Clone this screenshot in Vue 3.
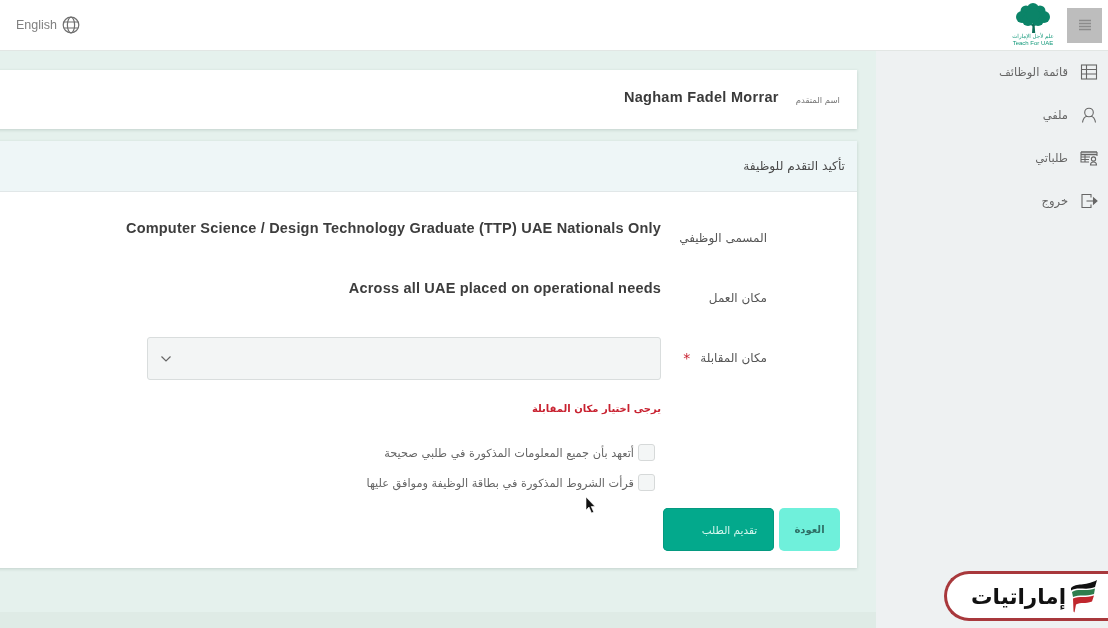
<script setup>
const menu = [
  { label: 'قائمة الوظائف', icon: 'table' },
  { label: 'ملفي', icon: 'user' },
  { label: 'طلباتي', icon: 'requests' },
  { label: 'خروج', icon: 'logout' }
]

const terms = [
  'أتعهد بأن جميع المعلومات المذكورة في طلبي صحيحة',
  'قرأت الشروط المذكورة في بطاقة الوظيفة وموافق عليها'
]
</script>

<template>
  <div class="page">
    <header class="topbar">
      <div class="brand">
        <button class="menu-btn" aria-label="menu">
          <svg width="14" height="12" viewBox="0 0 14 12" fill="none" stroke="#8c8c8c" stroke-width="1.3">
            <path d="M1 1.5h12M1 4.5h12M1 7.5h12M1 10.5h12" />
          </svg>
        </button>
        <div class="logo">
          <svg width="38" height="30" viewBox="0 0 38 30">
            <path d="M18 30l.8-11h1.600l.8 11zM19 24l-6-6 1-.6 5.500 4.500zM20 23l5-5 .8.6-5.500 5z" fill="#0d6e57" />
            <g fill="#0b8468">
              <circle cx="19" cy="6" r="6" />
              <circle cx="12" cy="8" r="5.500" />
              <circle cx="26" cy="8" r="5.500" />
              <circle cx="8" cy="14" r="6" />
              <circle cx="30" cy="14" r="6" />
              <circle cx="14" cy="17" r="6" />
              <circle cx="24" cy="17" r="6" />
              <circle cx="19" cy="12" r="7" />
            </g>
          </svg>
          <span class="logo-ar">علم لأجل الإمارات</span>
          <span class="logo-en">Teach For UAE</span>
        </div>
      </div>
      <div class="lang">
        <svg width="18" height="18" viewBox="0 0 18 18" fill="none" stroke="#6f6f6f" stroke-width="1.200">
          <circle cx="9" cy="9" r="7.800" />
          <ellipse cx="9" cy="9" rx="3.600" ry="7.800" />
          <path d="M1.800 6h14.400M1.800 12h14.400" />
        </svg>
        <span>English</span>
      </div>
    </header>

    <div class="layout">
      <aside class="sidebar">
        <a v-for="item in menu" :key="item.icon" class="side-item">
          <svg width="18" height="18" viewBox="0 0 18 18" fill="none" stroke="#666" stroke-width="1.100">
            <template v-if="item.icon === 'table'">
              <rect x="1.500" y="2" width="15" height="14" />
              <path d="M1.500 6.500h15M1.500 11h15M6.500 2v14" />
            </template>
            <template v-else-if="item.icon === 'user'">
              <circle cx="9" cy="6.500" r="4.300" />
              <path d="M2.500 16.500c.6-4 3-6 4.500-6.300M15.500 16.500c-.6-4-3-6-4.500-6.300" />
            </template>
            <template v-else-if="item.icon === 'requests'">
              <path d="M1 3h16M1 5.500h16" stroke-width="1.300" />
              <path d="M1 3v10h8M17 3v4M1 8h9M1 10.500h8M5 5.500V13" />
              <circle cx="13.500" cy="10" r="2.100" />
              <path d="M10.500 16c0-2 1.400-3 3-3s3 1 3 3z" />
            </template>
            <template v-else>
              <path d="M11 5.500V2.500H2v13h9v-3" />
              <path d="M6.500 9h8" />
              <path d="M13.500 6l3.500 3-3.500 3z" fill="#666" />
            </template>
          </svg>
          <span>{{ item.label }}</span>
        </a>
      </aside>

      <main class="content">
        <section class="card applicant">
          <span class="applicant-label">اسم المتقدم</span>
          <strong class="applicant-name" dir="ltr">Nagham Fadel Morrar</strong>
        </section>

        <section class="card apply">
          <h2 class="apply-title">تأكيد التقدم للوظيفة</h2>
          <div class="apply-body">
            <div class="row">
              <label class="row-label">المسمى الوظيفي</label>
              <div class="row-value" dir="ltr">Computer Science / Design Technology Graduate (TTP) UAE Nationals Only</div>
            </div>
            <div class="row">
              <label class="row-label">مكان العمل</label>
              <div class="row-value" dir="ltr">Across all UAE placed on operational needs</div>
            </div>
            <div class="row">
              <label class="row-label">مكان المقابلة<span class="star">*</span></label>
              <div class="select">
                <svg width="12" height="8" viewBox="0 0 12 8" fill="none" stroke="#666" stroke-width="1.200">
                  <path d="M1.500 1.500L6 6l4.500-4.500" />
                </svg>
              </div>
            </div>

            <div class="under-label">
              <p class="error">يرجى اختيار مكان المقابلة</p>
              <label v-for="term in terms" :key="term" class="term">
                <span class="box"></span>
                <span class="term-text">{{ term }}</span>
              </label>
            </div>

            <div class="actions">
              <button class="btn back">العودة</button>
              <button class="btn submit">تقديم الطلب</button>
            </div>
          </div>
        </section>

        <div class="band"></div>
      </main>
    </div>

    <!-- site watermark sits over the page -->
    <div class="badge">
      <svg width="28" height="34" viewBox="0 0 28 34">
        <path d="M1 9C7 3 14 8 27 1l-2 7C16 12 8 7 1 11.500z" fill="#111" />
        <path d="M2 13C8 9 16 13 25 9.500l-1 5.500c-8 3-15 0-21 3z" fill="#2f7d4d" />
        <path d="M3 19.500c6-3 13 0 21-3l-2 6c-7 3-11 0-16 3l-1.500 8-1-1z" fill="#c0272d" />
      </svg>
      <span>إماراتيات</span>
    </div>

    <svg class="cursor" width="12" height="18" viewBox="0 0 12 18">
      <path d="M1 1v13l3-3 2.500 6 2.200-1-2.500-5.500H10z" fill="#111" stroke="#fff" stroke-width=".6" />
    </svg>
  </div>
</template>

<style scoped>
.page {
  position: relative;
  width: 1108px;
  height: 628px;
  overflow: hidden;
  direction: rtl;
  background: #e5f1ed;
  color: #444;
  font-family: "DejaVu Sans", "Liberation Sans", sans-serif;
  filter: blur(0.4px);
}

.topbar {
  height: 51px;
  display: flex;
  justify-content: space-between;
  align-items: center;
  padding: 0 6px 0 16px;
  background: #fff;
  border-bottom: 1px solid #e2e6e4;
  box-sizing: border-box;
}

.brand {
  display: flex;
  align-items: center;
  gap: 15px;
}

.menu-btn {
  width: 35px;
  height: 35px;
  display: flex;
  align-items: center;
  justify-content: center;
  background: #bdbdbd;
  border: 0;
  padding: 0;
}

.logo {
  width: 38px;
  display: flex;
  flex-direction: column;
  align-items: center;
  color: #12997a;
  line-height: 7px;
}

.logo-ar {
  font-size: 5.500px;
  white-space: nowrap;
}

.logo-en {
  font-family: "Liberation Sans", sans-serif;
  font-size: 6px;
  white-space: nowrap;
}

.lang {
  display: flex;
  align-items: center;
  gap: 5px;
  font-family: "Liberation Sans", sans-serif;
  font-size: 12.500px;
  color: #808080;
}

.layout {
  display: flex;
  height: 577px;
}

.sidebar {
  width: 232px;
  flex: none;
  display: flex;
  flex-direction: column;
  gap: 2px;
  padding-right: 10px;
  box-sizing: border-box;
  background: #eef1f2;
}

.side-item {
  height: 41px;
  display: flex;
  align-items: center;
  gap: 12px;
  font-size: 11.500px;
  color: #666;
}

.content {
  flex: 1;
  min-width: 0;
  display: flex;
  flex-direction: column;
  padding: 19px 19px 0 0;
}

.card {
  margin-left: -6px;
  background: #fff;
  box-shadow: 0 1px 3px rgba(90, 120, 110, 0.25);
}

.applicant {
  height: 59px;
  flex: none;
  display: flex;
  align-items: center;
  gap: 17px;
  padding-right: 17px;
}

.applicant-label {
  font-size: 8.500px;
  color: #777;
}

.applicant-name {
  padding-bottom: 5px;
  font-family: "Liberation Sans", sans-serif;
  font-size: 14.500px;
  letter-spacing: 0.3px;
  color: #3a3a3a;
}

.apply {
  margin-top: 12px;
  flex: none;
}

.apply-title {
  height: 51px;
  margin: 0;
  padding-right: 12px;
  display: flex;
  align-items: center;
  font-size: 12.200px;
  font-weight: 400;
  color: #4a4a4a;
  background: #eef6f7;
  border-bottom: 1px solid #e1e7e8;
  box-sizing: border-box;
}

.apply-body {
  height: 376px;
  padding: 25px 90px 0 0;
  box-sizing: border-box;
}

.row {
  display: flex;
  height: 43px;
  margin-bottom: 17px;
}

.row-label {
  width: 106px;
  flex: none;
  display: flex;
  align-items: center;
  padding-bottom: 1px;
  box-sizing: border-box;
  font-size: 12px;
  color: #555;
}

.star {
  color: #c8202f;
  margin-right: 10px;
  font-size: 14px;
}

.row-value {
  width: 514px;
  display: flex;
  justify-content: flex-end;
  padding-top: 1px;
  font-family: "Liberation Sans", sans-serif;
  font-size: 14.500px;
  font-weight: 700;
  letter-spacing: 0.2px;
  line-height: 20px;
  color: #3d3d3d;
  white-space: nowrap;
}

.select {
  width: 514px;
  height: 43px;
  display: flex;
  align-items: center;
  padding-left: 12px;
  direction: ltr;
  background: #f3f5f5;
  border: 1px solid #d9dddd;
  border-radius: 3px;
  box-sizing: border-box;
}

.under-label {
  margin-right: 106px;
  margin-top: 21px;
}

.error {
  margin: 0 0 20px;
  font-size: 10px;
  font-weight: 700;
  line-height: 16px;
  color: #c8202f;
}

.term {
  display: flex;
  align-items: center;
  gap: 4px;
  height: 30px;
  margin-right: 6px;
  font-size: 11.300px;
  color: #666;
}

.term-text {
  padding-top: 2px;
}

.box {
  width: 17px;
  height: 17px;
  flex: none;
  background: #f4f6f6;
  border: 1px solid #d6d9d9;
  border-radius: 3px;
  box-sizing: border-box;
}

.actions {
  display: flex;
  margin-top: 11px;
  margin-right: -73px;
  gap: 5px;
}

.btn {
  height: 43px;
  border: 0;
  border-radius: 5px;
  font-family: inherit;
  font-size: 10px;
  font-weight: 700;
}

.back {
  width: 61px;
  background: #6ff0db;
  color: #2f6f66;
}

.submit {
  width: 111px;
  padding-left: 28px;
  font-size: 10.500px;
  font-weight: 400;
  background: #03a98c;
  color: #d6f8ef;
  box-shadow: inset 0 0 0 1px #049a80;
}

.band {
  flex: none;
  height: 16px;
  margin-top: auto;
  margin-right: -19px;
  background: #dfebe6;
}

.badge {
  position: absolute;
  left: 944px;
  top: 571px;
  width: 164px;
  height: 50px;
  display: flex;
  align-items: center;
  gap: 4px;
  padding-right: 10px;
  background: #fff;
  border: 3px solid #a8383c;
  border-right: 0;
  border-radius: 25px 0 0 25px;
  box-sizing: border-box;
  color: #111;
  font-size: 21.500px;
  font-weight: 700;
}

.cursor {
  position: absolute;
  left: 585px;
  top: 496px;
}
</style>

<style>
body {
  margin: 0;
}
</style>
